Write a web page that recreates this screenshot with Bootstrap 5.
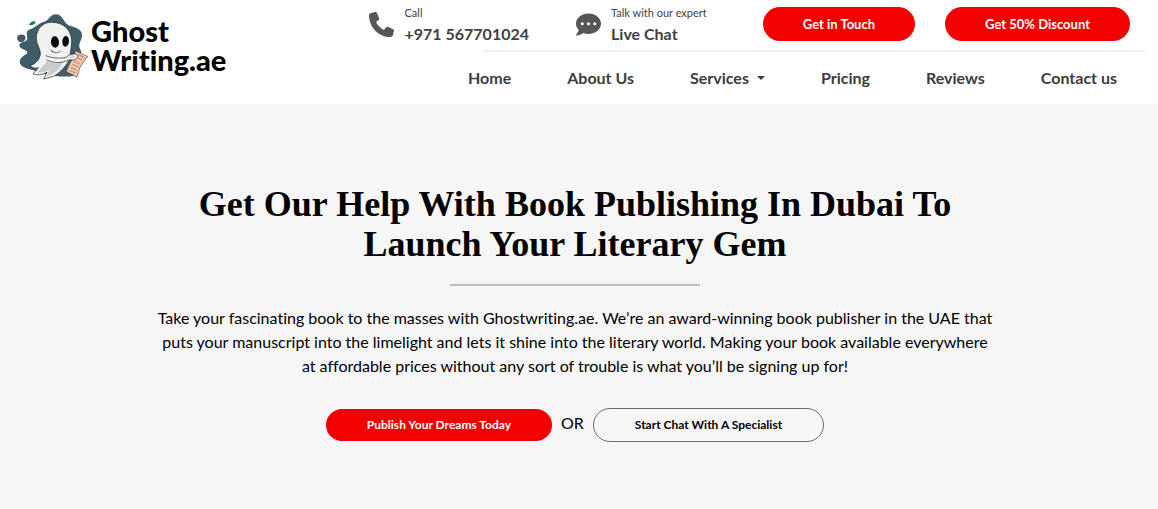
<!DOCTYPE html>
<html lang="en">
<head>
<meta charset="utf-8">
<meta name="viewport" content="width=device-width, initial-scale=1">
<title>Ghost Writing.ae</title>
<link href="https://cdn.jsdelivr.net/npm/bootstrap@5.3.0/dist/css/bootstrap.min.css" rel="stylesheet">
<style>
  body { font-family: Lato, "Liberation Sans", sans-serif; font-variant-ligatures: none; color: #000; background: #f6f6f6; }
  a { color: inherit; text-decoration: none; }
  .site-header { min-height: 104px; padding: 0 13px 0 16px; }
  .brand { padding-top: 12px; }
  .brand-name { font-weight: 900; font-size: 29px; line-height: 29px; padding: 4px 0 0 1px; }
  .brand-name span { display: block; }
  .contact-row { height: 50px; padding: 6px 15px 0 0; }
  .contact-link { color: #414141; gap: 10px; margin-right: 47px; }
  .contact-link svg { width: 25px; height: 25px; fill: #565656; margin-top: 6px; }
  .contact-link small { display: block; font-size: 11px; line-height: 14px; }
  .contact-link strong { display: block; font-size: 16px; line-height: 24px; font-weight: 700; margin-top: 2px; }
  .chat-link { margin-right: 56px; }
  .header-buttons { gap: 30px; padding-top: 1px; }
  .pill { border: 0; border-radius: 20px; padding: 0 40px; height: 34px; font-weight: 700; font-size: 13px; line-height: 20px; }
  .pill-red, .pill-red:hover { background: #f20000; color: #fff; }
  .pill-sm { font-size: 12px; height: 32px; padding: 0 41px; }
  .pill-line, .pill-line:hover { border: 1px solid #6c6c6c; color: #000; height: 34px; }
  .header-rule { width: 661px; max-width: 100%; height: 2px; background: #f0f0f0; }
  .main-nav .nav-link { color: #3c3c3c; font-weight: 700; font-size: 16px; line-height: 24px; padding: 14px 28px; }
  .hero { padding: 80px 8px 68px 0; }
  .hero-inner { max-width: 840px; }
  .hero h1 { font: 700 36px/40px "Liberation Serif", serif; margin: 0 0 20px; }
  .hero-rule { width: 250px; height: 2px; background: #bdbdbd; margin-bottom: 20px; }
  .hero p { font-size: 16px; line-height: 24px; margin-bottom: 30px; }
  .hero-actions { gap: 9px; }
  .hero-actions span { padding-bottom: 4px; }
</style>
</head>
<body>
<header class="site-header bg-white d-flex justify-content-between">
  <a class="brand d-flex align-items-start" href="#">
    <svg width="74" height="69" viewBox="18 20 222 207" aria-hidden="true">
      <path fill="#3f5d66" d="M100 50C115 48 120 27 138 27c20 0 22 25 38 33 16 6 41 10 40 30 0 15-10 22-8 36l6 14-24 72c-30 5-80 0-120-17-25-5-45-13-40-30 3-15 22-15 22-25-2-8-25-8-24-22 2-10 22-6 24-18 0-12-7-22 8-28 15-4 28-20 40-22z"/>
      <path fill="#3f5d66" d="M21 97c1-9 12-12 21-8 8 4 4 17-2 20-9 5-19-2-19-12z"/>
      <path fill="#09874b" d="M57 58c3-8 13-12 20-9-2 8-12 13-20 9z"/>
      <path fill="#f1f1ef" stroke="#171d20" stroke-width="2" stroke-linejoin="round" d="M79 97c1-29 22-48 49-46 32 1 56 22 57 55 1 19-6 35-4 51-9 21-28 43-50 56l-30 8 10-20c-14 8-29 9-42 5l16-19c-11 4-18 0-25-6 15-5 27-16 31-33 2-16-13-31-12-51z"/>
      <path fill="#c9cccb" d="M109 165c9 12 37 10 51 4-7 16-22 33-39 40l-12 5 11-22c-12 9-26 11-38 9l17-20c8-4 10-9 10-16z"/>
      <ellipse cx="135" cy="110" rx="12" ry="17" fill="#080b0c" transform="rotate(-6 135 110)"/>
      <ellipse cx="167" cy="108" rx="10" ry="16" fill="#080b0c" transform="rotate(5 167 108)"/>
      <path fill="none" stroke="#171d20" stroke-width="2" stroke-linecap="round" d="M126 138c9 6 17 6 25 0M123 134l5 6"/>
      <path fill="#efc5aa" stroke="#543f37" stroke-width="2" stroke-linejoin="round" d="M197 136c12 5 22 13 36 17-9 16-27 30-27 48l-6 15c-9-8-21-10-32-18 8-12 10-25 18-35 5-8 7-18 11-27z"/>
      <path fill="none" stroke="#896558" stroke-width="2" d="M203 147l20 10M199 156l18 8M192 168l17 7M187 177l17 8M182 186l17 8M178 195l17 7"/>
      <path fill="#f4f4f2" stroke="#171d20" stroke-width="2" stroke-linejoin="round" d="M107 151c18 7 39 10 61 5 8-6 16-11 24-10 7-1 13 4 10 10-5 9-16 9-24 7-20 12-51 11-68 0"/>
      <path fill="none" stroke="#171d20" stroke-width="1" d="M185 151l9 4m-15 0l9 4"/>
    </svg>
    <span class="brand-name"><span>Ghost</span><span>Writing.ae</span></span>
  </a>
  <div class="d-flex flex-column align-items-end">
    <div class="contact-row d-flex align-items-start">
      <a class="contact-link d-flex align-items-start" href="tel:+971567701024">
        <svg viewBox="0 0 512 512" aria-hidden="true"><path d="M164.9 24.6c-7.7-18.6-28-28.5-47.4-23.2l-88 24C12.1 30.2 0 46 0 64c0 247.4 200.6 448 448 448 18 0 33.8-12.1 38.6-29.5l24-88c5.3-19.4-4.6-39.7-23.2-47.4l-96-40c-16.3-6.8-35.2-2.1-46.3 11.6L304.7 368C234.3 334.7 177.3 277.7 144 207.3l49.3-40.3c13.7-11.2 18.4-30 11.6-46.3z"/></svg>
        <span><small>Call</small><strong>+971 567701024</strong></span>
      </a>
      <a class="contact-link chat-link d-flex align-items-start" href="#">
        <svg viewBox="0 0 512 512" aria-hidden="true"><path d="M256 32C114.6 32 0 125.1 0 240c0 49.6 21.4 95 57 130.7C44.5 421.1 2.7 466 2.2 466.5c-2.2 2.3-2.8 5.7-1.5 8.7S4.8 480 8 480c66.3 0 116-31.8 140.6-51.4 32.7 12.3 69 19.4 107.4 19.4 141.4 0 256-93.1 256-208S397.4 32 256 32z"/><g fill="#fff"><circle cx="128" cy="240" r="32"/><circle cx="256" cy="240" r="32"/><circle cx="384" cy="240" r="32"/></g></svg>
        <span><small>Talk with our expert</small><strong>Live Chat</strong></span>
      </a>
      <div class="header-buttons d-flex">
        <button type="button" class="btn pill pill-red">Get in Touch</button>
        <button type="button" class="btn pill pill-red">Get 50% Discount</button>
      </div>
    </div>
    <div class="header-rule"></div>
    <nav class="main-nav nav flex-nowrap text-nowrap">
      <a class="nav-link" href="#">Home</a>
      <a class="nav-link" href="#">About Us</a>
      <a class="nav-link dropdown-toggle" href="#" role="button" data-bs-toggle="dropdown">Services </a>
      <a class="nav-link" href="#">Pricing</a>
      <a class="nav-link" href="#">Reviews</a>
      <a class="nav-link" href="#">Contact us</a>
    </nav>
  </div>
</header>
<main class="hero text-center">
  <div class="hero-inner mx-auto">
    <h1>Get Our Help With Book Publishing In Dubai To Launch Your Literary Gem</h1>
    <div class="hero-rule mx-auto"></div>
    <p>Take your fascinating book to the masses with Ghostwriting.ae. We’re an award-winning book publisher in the UAE that puts your manuscript into the limelight and lets it shine into the literary world. Making your book available everywhere at affordable prices without any sort of trouble is what you’ll be signing up for!</p>
    <div class="hero-actions d-flex justify-content-center align-items-center">
      <button type="button" class="btn pill pill-red pill-sm">Publish Your Dreams Today</button>
      <span>OR</span>
      <button type="button" class="btn pill pill-sm pill-line">Start Chat With A Specialist</button>
    </div>
  </div>
</main>
<script src="https://cdn.jsdelivr.net/npm/bootstrap@5.3.0/dist/js/bootstrap.bundle.min.js"></script>
</body>
</html>
